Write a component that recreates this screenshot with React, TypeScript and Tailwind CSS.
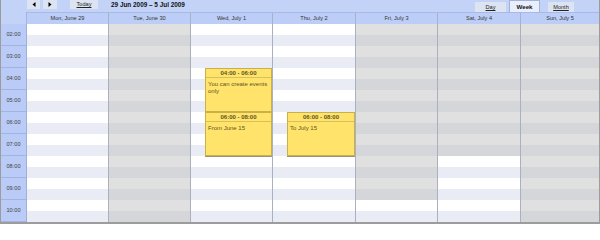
import React from 'react';

const days = [
  { label: 'Mon, June 29', grayUntil: 0, w: 'w-[82px]' },
  { label: 'Tue, June 30', grayUntil: 18, w: 'w-[82px]' },
  { label: 'Wed, July 1', grayUntil: 0, w: 'w-[82px]' },
  { label: 'Thu, July 2', grayUntil: 0, w: 'w-[83px]' },
  { label: 'Fri, July 3', grayUntil: 16, w: 'w-[82px]' },
  { label: 'Sat, July 4', grayUntil: 12, w: 'w-[83px]' },
  { label: 'Sun, July 5', grayUntil: 18, w: 'flex-1' },
];

const hours = ['02:00', '03:00', '04:00', '05:00', '06:00', '07:00', '08:00', '09:00', '10:00'];

type Ev = { day: number; start: number; end: number; text: string };

const events: Ev[] = [
  { day: 2, start: 4, end: 6, text: 'You can create events only' },
  { day: 2, start: 6, end: 8, text: 'From June 15' },
  { day: 3, start: 6, end: 8, text: 'To July 15' },
];

const pad = (h: number) => (h < 10 ? '0' + h : '' + h) + ':00';

const Event: React.FC<{ ev: Ev }> = ({ ev }) => (
  <div
    className="absolute left-[14px] right-0 bg-[#ffe36b] border border-[#c8b04a] shadow-[0_1px_0_#9e9477] flex flex-col text-[#5e5424]"
    style={{ top: (ev.start - 2) * 22, height: (ev.end - ev.start) * 22 }}
  >
    <div className="h-[9px] flex items-center justify-center border-b border-[#d8c159] font-bold text-[6px] leading-none">
      {pad(ev.start)} - {pad(ev.end)}
    </div>
    <div className="px-[2px] pt-[3px] text-[6px] leading-[7px]">{ev.text}</div>
  </div>
);

const Arrow: React.FC<{ dir: 'l' | 'r' }> = ({ dir }) => (
  <svg width="4" height="5" viewBox="0 0 4 5">
    {dir === 'l' ? <path d="M3.5 0 L0.5 2.5 L3.5 5 Z" fill="#000" /> : <path d="M0.5 0 L3.5 2.5 L0.5 5 Z" fill="#000" />}
  </svg>
);

export default function App() {
  return (
    <div className="w-[600px] h-[224px] overflow-hidden bg-[#c3d3f8] border-x border-b-2 border-[#9c9c9c] flex flex-col font-['Liberation_Sans','DejaVu_Sans',sans-serif] text-[5.6px] text-[#333]">
      {/* Toolbar */}
      <div className="h-[12px] flex items-start shrink-0">
        <div className="w-[26px]" />
        <div className="w-[13px] h-[9px] bg-[#dce3f1] flex items-center justify-center">
          <Arrow dir="l" />
        </div>
        <div className="w-[14px] h-[9px] bg-[#dce3f1] flex items-center justify-center ml-[3px]">
          <Arrow dir="r" />
        </div>
        <div className="w-[28px] h-[9px] bg-[#dce3f1] flex items-center justify-center ml-[13px] underline text-[#222]">
          Today
        </div>
        <div className="ml-[13px] h-[10px] flex items-center font-bold text-[6.4px] text-[#111]">
          29 Jun 2009 – 5 Jul 2009
        </div>
        <div className="flex-1" />
        <div className="mt-[2px] w-[31px] h-[10px] bg-[#dce3f1] flex items-center justify-center underline text-[#222]">
          Day
        </div>
        <div className="ml-[3px] w-[31px] h-[12px] bg-[#e8eefb] border-x border-t border-[#a3b2d4] flex items-center justify-center font-bold text-[6.2px] text-[#111]">
          Week
        </div>
        <div className="ml-[8px] mt-[2px] w-[26px] h-[10px] bg-[#dce3f1] flex items-center justify-center underline text-[#222]">
          Month
        </div>
        <div className="w-[25px]" />
      </div>

      {/* Header */}
      <div className="h-[12px] flex shrink-0">
        <div className="w-[26px] border-r border-[#a3b5e2]" />
        <div className="flex-1 flex bg-[#bccef7] border-t border-[#a8b9e3]">
          {days.map((d, i) => (
            <div
              key={d.label}
              className={`${d.w} flex items-center justify-center text-[#333] ${i < 6 ? 'border-r border-[#a3b2d0]' : ''}`}
            >
              {d.label}
            </div>
          ))}
        </div>
      </div>

      {/* Body */}
      <div className="flex flex-1">
        <div className="w-[26px] border-r border-[#9fb0d8] bg-[#b9cbf6] flex flex-col">
          {hours.map(h => (
            <div key={h} className="h-[22px] shrink-0 border-b border-[#a2b4e0] flex items-center justify-center text-[#444]">
              {h}
            </div>
          ))}
        </div>
        {days.map((d, i) => (
          <div key={d.label} className={`${d.w} relative flex flex-col ${i < 6 ? 'border-r border-[#a9b0bf]' : ''}`}>
            {Array.from({ length: 18 }).map((_, r) => {
              const gray = r < d.grayUntil;
              const odd = r % 2 === 1;
              const bg = gray ? (odd ? 'bg-[#d5d6da]' : 'bg-[#e0e0e0]') : odd ? 'bg-[#e9ebf5]' : 'bg-white';
              return <div key={r} className={`h-[11px] shrink-0 ${bg}`} />;
            })}
            {events
              .filter(e => e.day === i)
              .map(e => (
                <Event key={e.text} ev={e} />
              ))}
          </div>
        ))}
      </div>
    </div>
  );
}
